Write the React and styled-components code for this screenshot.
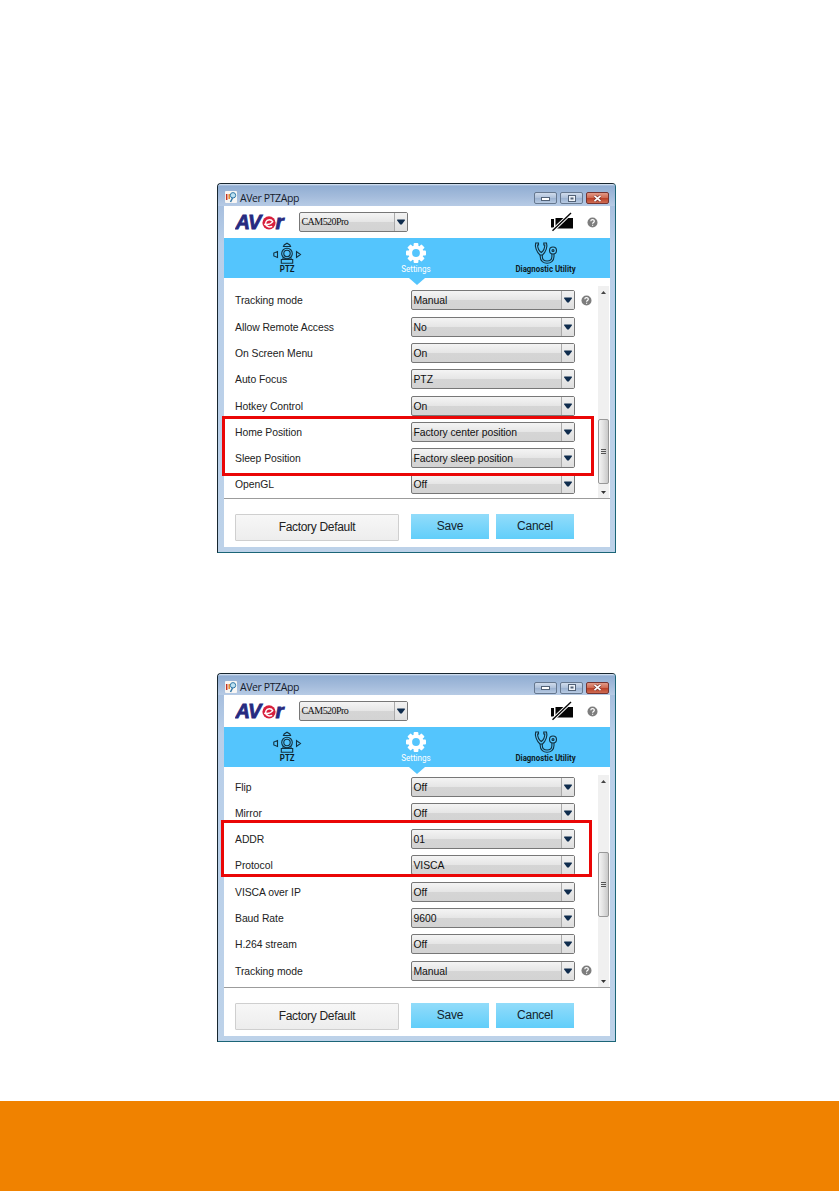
import styled, { createGlobalStyle, css } from "styled-components";

const GlobalStyle = createGlobalStyle`
  * {
    box-sizing: border-box;
  }
  body {
    margin: 0;
    background: #fff;
  }
`;
const Page = styled.div`
  width: 839px;
  height: 1191px;
  display: flex;
  flex-direction: column;
  align-items: flex-start;
  overflow: hidden;
  font-family: "Liberation Sans", Arial, sans-serif;
  color: #222;
`;
const PageFooter = styled.div`
  width: 100%;
  height: 90px;
  margin-top: auto;
  background: #f08200;
`;
const Window = styled.div`
  position: relative;
  width: 399px;
  height: ${(props) => props.$height}px;
  margin: ${(props) => props.$top}px 0 0 217px;
  border: 1px solid #17262f;
  border-right-color: #1b6577;
  border-bottom-color: #1b6577;
  border-radius: 4px 4px 0 0;
  background: linear-gradient(#9db6d8, #b9cfe9 60px, #bdd2e9);
  padding: 0 5px 5px 6px;
  display: flex;
  flex-direction: column;
`;
const TitleBar = styled.div`
  height: ${(props) => props.$height}px;
  flex: none;
  margin: 0 -5px 0 -6px;
  padding: 0 6px 0 7px;
  border-radius: 3px 3px 0 0;
  display: flex;
  align-items: center;
  background: linear-gradient(#e1ebf6 0, #91aed3 2px, #a3bbdb 55%, #b7cbe5);
`;
const Title = styled.span`
  margin: 5px auto 0 3px;
  font-family: "Open Sans", "Noto Sans", sans-serif;
  font-size: 10.5px;
  line-height: 14px;
  letter-spacing: -0.4px;
  color: #15202c;
`;
const AppIcon = styled.svg`
  margin-top: 4px;
`;
const WindowButtons = styled.div`
  display: flex;
  gap: 3px;
  margin-top: 6px;
`;
const WindowButton = styled.span`
  width: 23px;
  height: 12px;
  display: flex;
  align-items: center;
  justify-content: center;
  border: 1px solid #66788f;
  border-radius: 2px;
  background: linear-gradient(#d0dcec, #adc0da 50%, #9bb2d1 51%, #b7cae2);
  ${(props) =>
    props.$close &&
    css`
      border-color: #743432;
      background: linear-gradient(#e29a88, #cf6951 48%, #b93e25 50%, #ce6b52);
    `}
`;
const Header = styled.div`
  height: 32px;
  flex: none;
  padding: 0 12px 0 11px;
  background: #fff;
  display: flex;
  align-items: center;
`;
const Logo = styled.div`
  width: 64px;
  display: flex;
  align-items: center;
`;
const HeaderTools = styled.div`
  margin-left: auto;
  display: flex;
  align-items: center;
  gap: 13px;
`;
const Tabs = styled.div`
  height: 40px;
  flex: none;
  display: grid;
  grid-template-columns: 126px 132px 128px;
  background: #54c5fd;
`;
const Tab = styled.div`
  position: relative;
  display: flex;
  flex-direction: column;
  align-items: center;
  padding-top: 4px;
  color: ${(props) => (props.$active ? "#fff" : "#0c1c26")};
  ${(props) =>
    props.$active &&
    css`
      &::after {
        content: "";
        position: absolute;
        z-index: 1;
        top: 100%;
        left: 59px;
        border: 8px solid transparent;
        border-top: 7px solid #54c5fd;
        border-bottom: 0;
      }
    `}
`;
const TabLabel = styled.span`
  margin-top: -1px;
  font-family: Roboto, sans-serif;
  font-size: 9.8px;
  line-height: 11px;
  font-weight: ${(props) => (props.$active ? 400 : 700)};
  white-space: nowrap;
  transform: scaleX(${(props) => (props.$active ? 0.82 : 0.8)});
`;
const Settings = styled.div`
  flex: 1;
  min-height: 0;
  display: flex;
  background: #fff;
  border-bottom: 1px solid #9c9c9c;
`;
const Rows = styled.div`
  width: 374px;
  padding: ${(props) => props.$top}px 0 0 11px;
`;
const Row = styled.div`
  height: 26.3px;
  display: grid;
  grid-template-columns: 176px 164px 1fr;
  align-items: start;
`;
const RowLabel = styled.span`
  font-size: 10.4px;
  line-height: 21px;
  letter-spacing: -0.05px;
`;
const SelectBox = styled.div`
  width: ${(props) => props.$width}px;
  height: 20px;
  display: flex;
  justify-content: space-between;
  border: 1px solid #777;
  border-radius: 2px;
  background: linear-gradient(#f4f4f4, #e6e6e6 48%, #d5d5d5 50%, #d3d3d3);
  font-size: 10.4px;
  line-height: 19px;
  letter-spacing: -0.07px;
  color: #111;
  padding-left: 1.5px;
  ${(props) =>
    props.$serif &&
    css`
      font-family: "Liberation Serif", serif;
      font-size: 10px;
      line-height: 18px;
      letter-spacing: -0.55px;
    `}
`;
const Arrow = styled.span`
  width: 13px;
  border-left: 1px solid #aaa;
  background: linear-gradient(#f2f2f2, #dedede);
  display: flex;
  align-items: center;
  justify-content: center;
`;
const HelpWrap = styled.span`
  height: 20px;
  padding-left: 6px;
  display: flex;
  align-items: center;
`;
const ScrollBar = styled.div`
  width: 11px;
  margin: ${(props) => props.$top}px 1px 0 auto;
  display: flex;
  flex-direction: column;
  justify-content: space-between;
  align-items: center;
  background: #f0f0f0;
  padding: 5px 0 4px;
`;
const Thumb = styled.div`
  width: 11px;
  height: 65px;
  flex: none;
  margin-top: ${(props) => props.$offset}px;
  margin-bottom: auto;
  border: 1px solid #989898;
  border-radius: 2px;
  background: linear-gradient(90deg, #f4f4f4, #e2e2e2 45%, #c9c9c9);
  display: flex;
  align-items: center;
  justify-content: center;
`;
const Actions = styled.div`
  height: 48px;
  flex: none;
  background: #fff;
  display: flex;
  align-items: flex-start;
  padding: 15px 0 0 11px;
`;
const ActionButton = styled.div`
  width: 78px;
  height: 25px;
  margin-right: 7px;
  background: linear-gradient(#92dcfa, #61cefa);
  font-size: 12px;
  line-height: 25px;
  letter-spacing: -0.25px;
  text-align: center;
  color: #12242e;
  ${(props) =>
    props.$plain &&
    css`
      width: 164px;
      height: 27px;
      margin-right: 12px;
      border: 1px solid #cfcfcf;
      border-radius: 1px;
      background: linear-gradient(#f7f7f7, #ededed);
      letter-spacing: -0.32px;
      color: #222;
    `}
`;
// red frame lying over the highlighted rows
const Highlight = styled.div`
  position: absolute;
  z-index: 2;
  left: ${(props) => props.$left}px;
  top: ${(props) => props.$top}px;
  width: ${(props) => props.$width}px;
  height: ${(props) => props.$height}px;
  border: 3px solid #ea0606;
`;

const HelpIcon = () => (
  <svg width="11" height="11" viewBox="0 0 11 11">
    <circle cx="5.5" cy="5.5" r="5" fill="#7d7d7d" />
    <path
      d="M3.8 4.3c0-2.3 3.5-2.2 3.5-.1 0 1.3-1.7 1.2-1.7 2.5M5.6 7.7v1.1"
      fill="none"
      stroke="#fff"
      strokeWidth="1.2"
    />
  </svg>
);

const AverLogo = () => (
  <svg width="60" height="28" viewBox="0 -4 60 28">
    <g
      fill="#262a80"
      stroke="#262a80"
      strokeWidth=".8"
      fontFamily="Liberation Sans, Arial, sans-serif"
      fontWeight="700"
      fontStyle="italic"
    >
      <text x=".5" y="16.5" fontSize="20">
        A
      </text>
      <text x="13" y="16.5" fontSize="20">
        V
      </text>
      <text x="40.5" y="16.5" fontSize="21">
        r
      </text>
    </g>
    <circle cx="34" cy="10.8" r="6.6" fill="#d8203c" />
    <path
      d="M29.2 12.2c3.6.8 7-.4 8.600-2.500-1.400-2.800-5.700-2.600-6.900.4-1.100 3.500 2.300 5.900 6.300 4.300"
      fill="none"
      stroke="#fff"
      strokeWidth="1.4"
    />
  </svg>
);

const CameraOffIcon = () => (
  <svg width="24" height="20" viewBox="0 0 24 20">
    <path d="M1 7h3v8.5H1zM5.5 6H23v10.5H5.5z" fill="#050505" />
    <path d="M2.5 18.8 21 1.1" stroke="#fff" strokeWidth="3.4" />
    <path d="M2.5 18.8 21 1.1" stroke="#050505" strokeWidth="1.4" />
  </svg>
);

const PtzIcon = () => (
  <svg
    width="30"
    height="22"
    viewBox="0 0 30 22"
    fill="none"
    stroke="#12303f"
    strokeWidth="1.1"
  >
    <path d="M11.5 4.5 12.2 3 15 1.2 17.8 3l.7 1.5zM5.5 9.5v6L1.8 14v-3zM24.5 9.5v6l4-3z" />
    <circle cx="15" cy="11.5" r="5.3" />
    <circle cx="15" cy="11.5" r="3.2" />
    <path d="M11 15.5v2H9.3v3.7h11.4v-3.700H19v-2M11 17.5h8" />
  </svg>
);

const GearIcon = () => (
  <svg width="22" height="22" viewBox="0 0 22 22">
    <g fill="#fff">
      {[0, 45, 90, 135].map((angle) => (
        <rect
          key={angle}
          x="8.6"
          y="1"
          width="4.8"
          height="20"
          rx="1"
          transform={`rotate(${angle} 11 11)`}
        />
      ))}
      <circle cx="11" cy="11" r="7.6" />
    </g>
    <circle cx="11" cy="11" r="3.9" fill="#54c5fd" />
  </svg>
);

const StethoscopeIcon = () => (
  <svg
    width="24"
    height="22"
    viewBox="0 0 24 22"
    fill="none"
    stroke="#12303f"
    strokeWidth="1.1"
  >
    <path d="M4.5 1H1.7C.6 4.5 2.5 10 6 13h2.5c3.5-3 5.2-8.5 4-12H9.8v2h1c0 3-1.5 6-3.5 7.5C5.2 9 3.6 6 3.6 3h.9z" />
    <path d="M6.2 13v1.5c0 9 13.8 9 13.8 0v-2.6M8.3 13v1.5c0 6 9.6 6 9.6 0v-2.6" />
    <circle cx="19" cy="8.5" r="3.5" />
    <circle cx="19" cy="8.5" r="1" />
  </svg>
);

const PtzAppIcon = () => (
  <AppIcon width="12" height="12" viewBox="0 0 12 12">
    <rect width="12" height="12" rx="1" fill="#f8f6f4" />
    <path d="M1.7 3v6" stroke="#c43425" strokeWidth="1.5" />
    <path d="M4.2 3v5" stroke="#e5852b" strokeWidth="1.5" />
    <circle cx="8" cy="4.3" r="2.7" fill="#bce1f2" stroke="#347aa8" />
    <path d="M7.5 7 5.5 11" stroke="#347aa8" strokeWidth="1.5" />
  </AppIcon>
);

function Select({ value, width = 164, serif }) {
  return (
    <SelectBox $width={width} $serif={serif}>
      {value}
      <Arrow>
        <svg width="8" height="6" viewBox="0 0 8 6">
          <path d="M.2.5h7.6v1L4.8 5.5H3.2L.2 1.5z" fill="#0f2c4d" />
        </svg>
      </Arrow>
    </SelectBox>
  );
}

function PtzWindow({
  top,
  height,
  titleHeight,
  rows,
  rowsTop,
  scrollTop,
  thumbOffset,
  highlight,
}) {
  return (
    <Window $top={top} $height={height}>
      <TitleBar $height={titleHeight}>
        <PtzAppIcon />
        <Title>AVer PTZApp</Title>
        <WindowButtons>
          <WindowButton>
            <svg width="9" height="5">
              <rect x=".5" y="1.5" width="8" height="3" fill="#fff" stroke="#526277" />
            </svg>
          </WindowButton>
          <WindowButton>
            <svg width="8" height="7">
              <rect x=".5" y=".5" width="7" height="6" fill="#eef3f9" stroke="#526277" />
              <rect x="2.5" y="2.5" width="3" height="2" fill="#526277" />
            </svg>
          </WindowButton>
          <WindowButton $close>
            <svg width="9" height="7" viewBox="0 0 9 7">
              <path d="m1.5.8 6 5.4m0-5.4-6 5.4" stroke="#7b3430" strokeWidth="3" />
              <path d="m1.5.8 6 5.4m0-5.4-6 5.4" stroke="#fff" strokeWidth="1.7" />
            </svg>
          </WindowButton>
        </WindowButtons>
      </TitleBar>
      <Header>
        <Logo>
          <AverLogo />
        </Logo>
        <Select value="CAM520Pro" width={109} serif />
        <HeaderTools>
          <CameraOffIcon />
          <HelpIcon />
        </HeaderTools>
      </Header>
      <Tabs>
        <Tab>
          <PtzIcon />
          <TabLabel>PTZ</TabLabel>
        </Tab>
        <Tab $active>
          <GearIcon />
          <TabLabel $active>Settings</TabLabel>
        </Tab>
        <Tab>
          <StethoscopeIcon />
          <TabLabel>Diagnostic Utility</TabLabel>
        </Tab>
      </Tabs>
      <Settings>
        <Rows $top={rowsTop}>
          {rows.map(([label, value]) => (
            <Row key={label}>
              <RowLabel>{label}</RowLabel>
              <Select value={value} />
              {label === "Tracking mode" && (
                <HelpWrap>
                  <HelpIcon />
                </HelpWrap>
              )}
            </Row>
          ))}
        </Rows>
        <ScrollBar $top={scrollTop}>
          <svg width="5" height="3">
            <path d="M0 3 2.5 0 5 3z" fill="#444" />
          </svg>
          <Thumb $offset={thumbOffset}>
            <svg width="5" height="7">
              <path d="M0 1.5h5M0 3.5h5M0 5.5h5" stroke="#555" />
            </svg>
          </Thumb>
          <svg width="5" height="3">
            <path d="M0 0h5L2.5 3z" fill="#333" />
          </svg>
        </ScrollBar>
      </Settings>
      <Actions>
        <ActionButton $plain>Factory Default</ActionButton>
        <ActionButton>Save</ActionButton>
        <ActionButton>Cancel</ActionButton>
      </Actions>
      <Highlight
        $left={highlight.left}
        $top={highlight.top}
        $width={highlight.width}
        $height={highlight.height}
      />
    </Window>
  );
}

const positionRows = [
  ["Tracking mode", "Manual"],
  ["Allow Remote Access", "No"],
  ["On Screen Menu", "On"],
  ["Auto Focus", "PTZ"],
  ["Hotkey Control", "On"],
  ["Home Position", "Factory center position"],
  ["Sleep Position", "Factory sleep position"],
  ["OpenGL", "Off"],
];
const protocolRows = [
  ["Flip", "Off"],
  ["Mirror", "Off"],
  ["ADDR", "01"],
  ["Protocol", "VISCA"],
  ["VISCA over IP", "Off"],
  ["Baud Rate", "9600"],
  ["H.264 stream", "Off"],
  ["Tracking mode", "Manual"],
];

function App() {
  return (
    <>
      <GlobalStyle />
      <Page>
        <PtzWindow
          top={183}
          height={370}
          titleHeight={22}
          rows={positionRows}
          rowsTop={12.4}
          scrollTop={8}
          thumbOffset={125}
          highlight={{ left: 4, top: 232, width: 372, height: 60 }}
        />
        <PtzWindow
          top={120}
          height={369}
          titleHeight={21}
          rows={protocolRows}
          rowsTop={9.6}
          scrollTop={8}
          thumbOffset={69}
          highlight={{ left: 3, top: 146, width: 371, height: 57 }}
        />
        <PageFooter />
      </Page>
    </>
  );
}

export default App;
